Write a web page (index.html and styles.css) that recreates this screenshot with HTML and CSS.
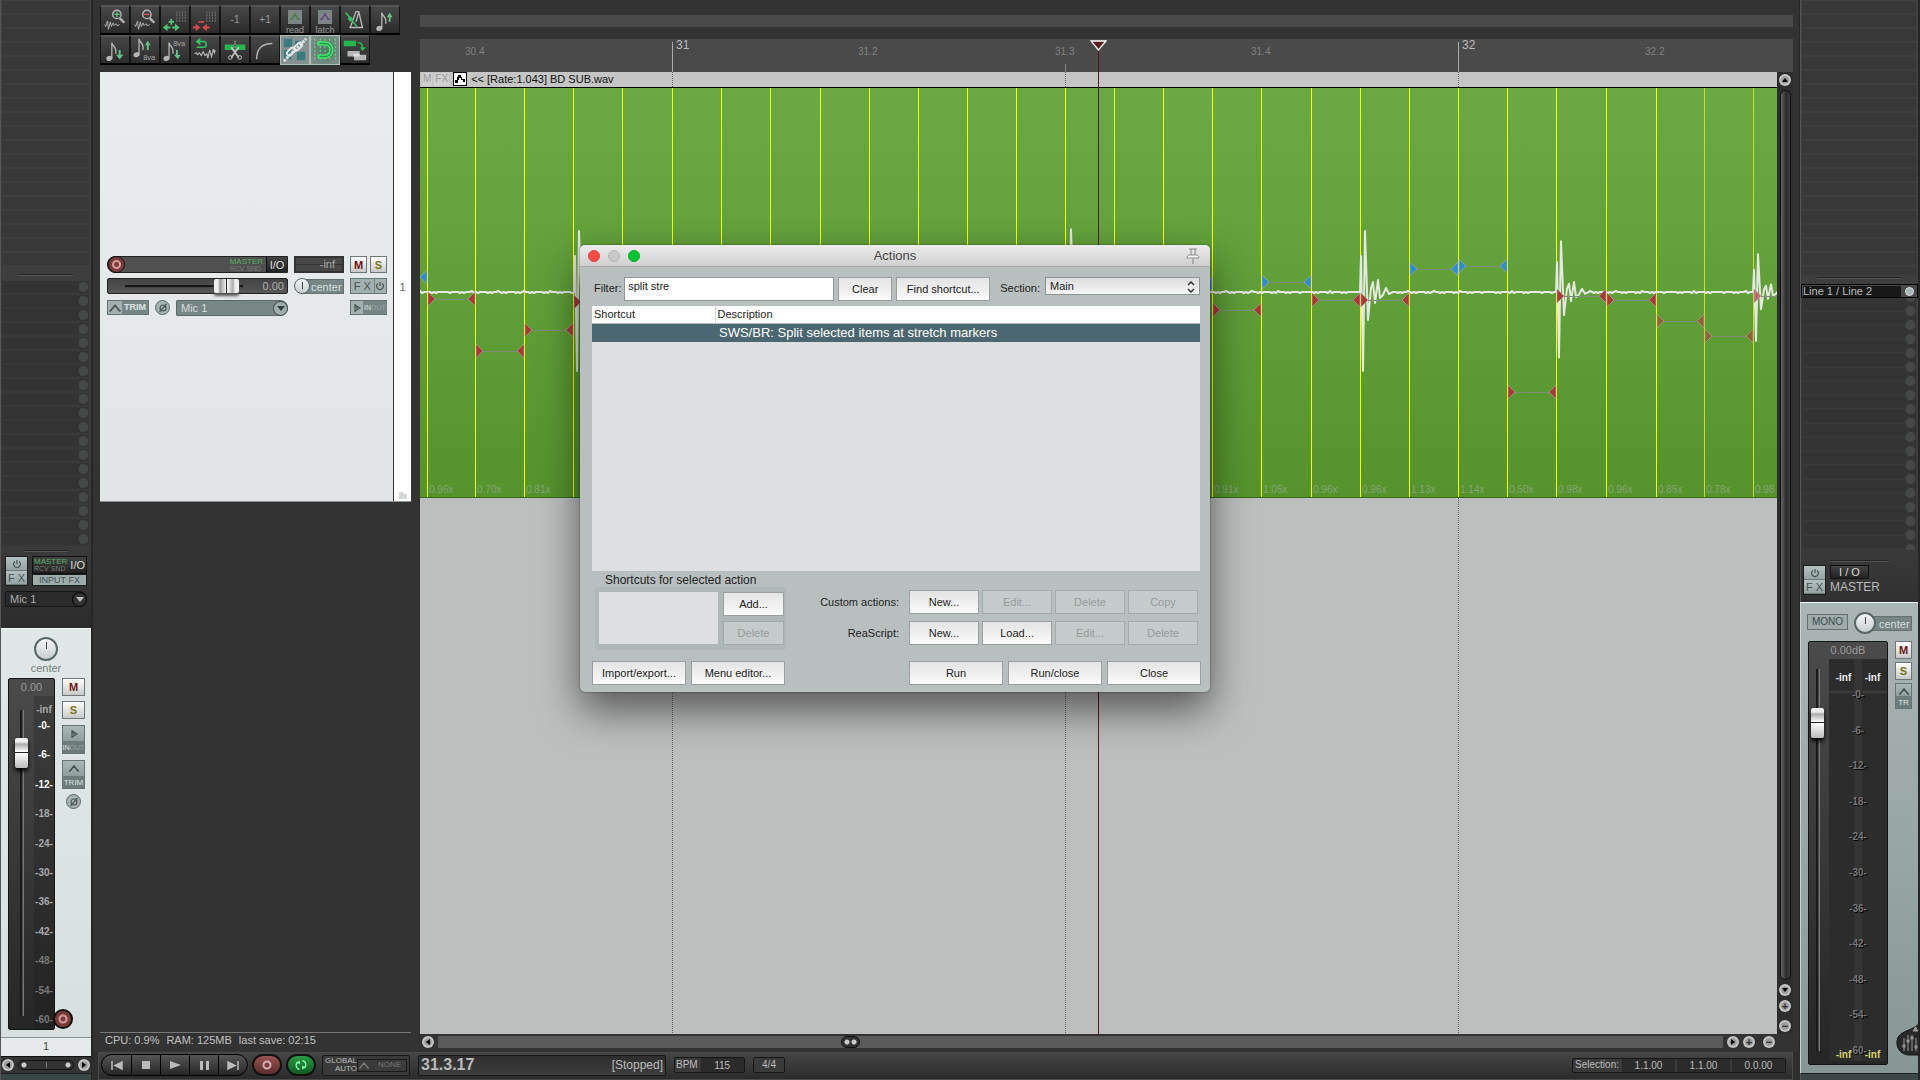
FILE: index.html
```html
<!DOCTYPE html>
<html lang="en">

<head>
    <meta charset="UTF-8">
    <meta name="viewport" content="width=device-width, initial-scale=1.0">
    <title>Actions</title>
    <link rel="stylesheet" href="styles.css">
</head>

<body>
    <!-- shared icons -->
    <svg class="defs" width="0" height="0" aria-hidden="true">
        <symbol id="power" viewBox="0 0 10 10"><path d="M3 2.4a3.4 3.4 0 1 0 4 0M5 1v4" fill="none" stroke="currentColor" stroke-width="1.2" /></symbol>
        <symbol id="env" viewBox="0 0 12 8"><path d="M1 7h1l4-5 4 5h1" fill="none" stroke="currentColor" stroke-width="1.5" /></symbol>
        <symbol id="mon" viewBox="0 0 10 10"><path d="M3 1v8M3 2l5 3-5 3M5 4v2" fill="none" stroke="currentColor" stroke-width="1.2" /></symbol>
        <symbol id="phase" viewBox="0 0 10 10"><circle cx="5" cy="5" r="3" fill="none" stroke="currentColor" stroke-width="1.2" /><path d="M1.5 9l7-8" stroke="currentColor" stroke-width="1.2" /></symbol>
        <symbol id="note" viewBox="0 0 30 30"><ellipse cx="9" cy="24" rx="3.4" ry="2.6" fill="#b5b5b5" transform="rotate(-20 9 24)" /><path d="M11.6 23V7c1 5 6 5 4 12" fill="none" stroke="#b5b5b5" stroke-width="1.4" /></symbol>
    </svg>

    <aside class="mixer">
        <div class="slots inserts"></div>
        <hr class="divider">
        <div class="slots sends"></div>
        <hr class="divider small">
        <div class="strip-io">
            <div class="fx-stack">
                <button aria-label="FX bypass"><svg width="10" height="10"><use href="#power" /></svg></button>
                <button>F X</button>
            </div>
            <div class="io-stack">
                <button class="io"><span class="route"><b>MASTER</b><i>RCV SND</i></span>I/O</button>
                <button class="input-fx">INPUT FX</button>
            </div>
        </div>
        <button class="input-pick dark">Mic 1 <span class="drop"></span></button>

        <section class="channel">
            <div class="pan"><span class="knob"></span><span>center</span></div>
            <div class="channel-body">
                <div class="meter">
                    <span class="gain">0.00</span>
                    <div class="meter-body">
                        <input class="fader" type="range" aria-label="Track volume" min="0" max="100" value="90">
                        <div class="mono-scale">
                            <span>-inf</span>
                            <ul class="scale">
                                <li class="hot">-0-</li><li class="hot">-6-</li><li class="hot">-12-</li><li>-18-</li><li>-24-</li><li>-30-</li><li>-36-</li><li>-42-</li><li class="low">-48-</li><li class="low">-54-</li><li class="low">-60-</li>
                            </ul>
                        </div>
                    </div>
                    <button class="rec-dot" aria-label="Record arm"></button>
                </div>
                <div class="channel-buttons">
                    <button class="ms mute">M</button>
                    <button class="ms solo">S</button>
                    <button class="duo"><svg width="10" height="10"><use href="#mon" /></svg><span class="tiny">IN<i>OUT</i></span></button>
                    <button class="duo"><svg width="12" height="8"><use href="#env" /></svg><span>TRIM</span></button>
                    <button class="round" aria-label="Phase"><svg width="10" height="10"><use href="#phase" /></svg></button>
                </div>
            </div>
            <div class="channel-number">1</div>
        </section>
        <div class="mixer-scroll">
            <button class="dot left" aria-label="Scroll left"></button>
            <span class="mini-bar"></span>
            <button class="dot right" aria-label="Scroll right"></button>
        </div>
        <div class="mixer-foot"></div>
    </aside>

    <main>
        <div class="workspace">
            <div class="tcp">
                <div class="toolbar">
                    <button aria-label="Zoom in"><svg viewBox="0 0 30 30"><path d="M4 20l1 2 2-6 1 9 2-8 1 5 2-4 1 3 2-2 1 2 3-1" fill="none" stroke="#b5b5b5" /><circle cx="17" cy="9" r="4.5" fill="none" stroke="#b5b5b5" stroke-width="1.5" /><path d="M20 13l5 5" stroke="#b5b5b5" stroke-width="2.5" /><path d="M14 9h6M17 6v6" stroke="#4fc27a" stroke-width="1.5" /></svg></button>
                    <button aria-label="Zoom out"><svg viewBox="0 0 30 30"><path d="M4 20l1 2 2-6 1 9 2-8 1 5 2-4 1 3 2-2 1 2 3-1" fill="none" stroke="#b5b5b5" /><circle cx="17" cy="9" r="4.5" fill="none" stroke="#b5b5b5" stroke-width="1.5" /><path d="M20 13l5 5" stroke="#b5b5b5" stroke-width="2.5" /><path d="M14 9h6" stroke="#e05050" stroke-width="1.5" /></svg></button>
                    <button aria-label="Widen grid"><svg viewBox="0 0 30 30"><path d="M17 6v12M20 6v12M23 6v12M26 6v12" stroke="#777" stroke-dasharray="2 1" /><path d="M8 17h6M11 14v6M5 23h5M12 23h5" stroke="#4fc27a" stroke-width="2" /><path d="M7 19v8l-5-4zM15 19v8l5-4z" fill="#4fc27a" /></svg></button>
                    <button aria-label="Narrow grid"><svg viewBox="0 0 30 30"><path d="M17 6v12M20 6v12M23 6v12M26 6v12" stroke="#777" stroke-dasharray="2 1" /><path d="M8 17h6M2 23h4M16 23h4" stroke="#d84848" stroke-width="2" /><path d="M5 19v8l5-4zM17 19v8l-5-4z" fill="#d84848" /></svg></button>
                    <button>-1</button>
                    <button>+1</button>
                    <button class="auto"><svg viewBox="0 0 14 14"><path d="M0 0h14v14H0z" fill="#7d8587" /><path d="M2 9h2l3-5 3 5h2" fill="none" stroke="#4c8045" stroke-width="1.5" /><path d="M3 8h2v2H3zM6 3h2v2H6zM9 8h2v2H9z" fill="#4c8045" /></svg>read</button>
                    <button class="auto"><svg viewBox="0 0 14 14"><path d="M0 0h14v14H0z" fill="#7d8587" /><path d="M2 9h2l3-5 3 5h2" fill="none" stroke="#6a4a80" stroke-width="1.5" /><path d="M3 8h2v2H3zM6 3h2v2H6zM9 8h2v2H9z" fill="#6a4a80" /></svg>latch</button>
                    <button aria-label="Metronome"><svg viewBox="0 0 30 30"><path d="M10 23L16 6h3l4 17H9M19 7l-3 10" fill="none" stroke="#b5b5b5" stroke-width="1.5" /><path d="M5 7l12 15" stroke="#35c463" stroke-width="1.5" /><path d="M10 11l3 3-3 3-3-3z" fill="#35c463" /></svg></button>
                    <button aria-label="Semitone up"><svg viewBox="0 0 30 30"><use href="#note" width="30" height="30" /><path d="M20 17V11" stroke="#63c585" stroke-width="2" /><path d="M17 12l3-5 3 5z" fill="#63c585" /></svg></button>
                    <button aria-label="Semitone down"><svg viewBox="0 0 30 30"><use href="#note" width="30" height="30" /><path d="M20 15v6" stroke="#63c585" stroke-width="2" /><path d="M16 20h8l-4 5z" fill="#63c585" /></svg></button>
                    <button aria-label="Octave up"><svg viewBox="0 0 30 30"><use href="#note" x="-3" y="-4" width="30" height="30" /><path d="M18 15V9" stroke="#63c585" stroke-width="2" /><path d="M15 10l3-5 3 5z" fill="#63c585" /><text x="13" y="26">8va</text></svg></button>
                    <button aria-label="Octave down"><svg viewBox="0 0 30 30"><use href="#note" x="-3" width="30" height="30" /><path d="M17 15v6" stroke="#63c585" stroke-width="2" /><path d="M14 20h7l-3 5z" fill="#63c585" /><text x="13" y="11">8va</text></svg></button>
                    <button aria-label="Undo stretch"><svg viewBox="0 0 30 30"><path d="M8 6h6c3 0 3 6 0 6H6" fill="none" stroke="#35c463" stroke-width="1.6" /><path d="M10 2v8L5 6z" fill="#35c463" /><path d="M4 19l2-1 1 2 2-2 2 3 2-4 2 4 2-2 1 5 2-9 2 7 2-8 1 4 1-3" fill="none" stroke="#b5b5b5" stroke-width="1.2" /></svg></button>
                    <button aria-label="Split items"><svg viewBox="0 0 30 30"><path d="M4 9h10v6H4zM16 9h10v6H16z" fill="#24b84e" /><path d="M15 5v15" stroke="#ccc" stroke-dasharray="2 1" /><path d="M11 12l8 11M19 12l-8 11" stroke="#c5c5c5" stroke-width="1.8" /><circle cx="10" cy="23" r="2" fill="none" stroke="#c5c5c5" /><circle cx="20" cy="23" r="2" fill="none" stroke="#c5c5c5" /></svg></button>
                    <button aria-label="Fade"><svg viewBox="0 0 30 30"><path d="M6 25C6 13 12 8 23 8" fill="none" stroke="#b5b5b5" stroke-width="1.6" /></svg></button>
                    <button class="lit" aria-label="Group link"><svg viewBox="0 0 30 30"><path d="M3 3h9v9H3zM15 5h6v7h-6zM3 15h8v10H3zM17 17h9v9h-9z" fill="#3b7b80" /><path d="M3 27L27 3" stroke="#ddd" stroke-width="3" stroke-dasharray="3 1" /><g fill="none" stroke="#e8e8e8" stroke-width="2"><rect x="6" y="14" width="10" height="5" rx="2.5" transform="rotate(-45 11 17)" /><rect x="13" y="9" width="10" height="5" rx="2.5" transform="rotate(-45 18 11)" /></g></svg></button>
                    <button class="lit magnet" aria-label="Snap"><svg viewBox="0 0 30 30"><path d="M4 3v24M10 3v24M15 3v24M20 3v24M26 3v24" stroke="#6fe394" stroke-dasharray="2 2" /><path d="M7 8h8c9 0 9 14 0 14H7" fill="none" stroke="#3cf06c" stroke-width="4.500" /><path d="M9 8h6c9 0 9 14 0 14H9" fill="none" stroke="#28914a" stroke-width="1.500" /></svg></button>
                    <button aria-label="Ripple"><svg viewBox="0 0 30 30"><path d="M3 5h13v6H3z" fill="#24b84e" /><path d="M18 7c4 0 5 3 5 6" fill="none" stroke="#24b84e" stroke-width="1.5" /><path d="M20 12h7l-4 4z" fill="#24b84e" /><path d="M7 16h13v6H7zM14 20h13v6H14z" fill="#b5b5b5" /><path d="M13 19h7v3h-7z" fill="#ddd" /></svg></button>
                </div>

                <section class="track">
                    <div class="track-controls">
                        <div class="name-row">
                            <button class="rec-dot" aria-label="Record arm"></button>
                            <span class="route"><b>MASTER</b><i>RCV SND</i></span>
                            <button class="io">I/O</button>
                        </div>
                        <div class="peak">-inf</div>
                        <div class="pair">
                            <button class="ms mute">M</button>
                            <button class="ms solo">S</button>
                        </div>
                        <div class="vol-row">
                            <input class="hfader" type="range" aria-label="Volume" min="0" max="100" value="96">
                            <span>0.00</span>
                        </div>
                        <div class="pan-pill"><span class="knob"></span><span>center</span></div>
                        <div class="joined"><button class="wide">F X</button><button aria-label="FX bypass"><svg width="10" height="10"><use href="#power" /></svg></button></div>
                        <div class="trim-row">
                            <button class="joined trim"><svg width="14" height="9"><use href="#env" /></svg><span>TRIM</span></button>
                            <button class="round" aria-label="Phase"><svg width="10" height="10"><use href="#phase" /></svg></button>
                            <button class="input-pick">Mic 1 <span class="drop"></span></button>
                        </div>
                        <span></span>
                        <button class="joined trim"><svg width="12" height="10"><use href="#mon" /></svg><span class="tiny">IN<i>OUT</i></span></button>
                    </div>
                    <div class="track-index">
                        <span>1</span>
                        <svg width="8" height="7"><path d="M0 0h4l1 2h3v5H0z" fill="#d5d8d8" /></svg>
                    </div>
                </section>
                <div class="tcp-empty"></div>
                <p class="status"><span>CPU: 0.9%</span><span>RAM: 125MB</span><span>last save: 02:15</span></p>
            </div>

            <div class="arrange">
                <div class="region-lane"></div>
                <div class="ruler"><svg id="ruler" width="100%" height="33"></svg></div>
                <div class="lanes">
                    <div class="canvas">
                        <div class="item-head"><button>M</button><button>FX</button><button class="env-on" aria-label="Take envelope"><svg width="12" height="12"><path d="M1 10V7h2V4h1V2h3v2h1v2h3v3H9V7H7V5H5v2H4v3z" fill="#000" /></svg></button><span>&lt;&lt; [Rate:1.043] BD SUB.wav</span></div>
                        <svg id="item" class="item" width="100%"></svg>
                        <svg id="grid" class="grid" width="100%" height="100%"></svg>
                    </div>
                    <div class="vscroll">
                        <button class="dot up" aria-label="Scroll up"></button>
                        <span class="bar"></span>
                        <button class="dot down" aria-label="Scroll down"></button>
                        <button class="dot sign" aria-label="Zoom in">+</button>
                        <button class="dot sign" aria-label="Zoom out">−</button>
                    </div>
                </div>
                <div class="hscroll">
                    <button class="dot left" aria-label="Scroll left"></button>
                    <span class="hbar"><i></i></span>
                    <button class="dot right" aria-label="Scroll right"></button>
                    <button class="dot sign" aria-label="Zoom in">+</button>
                    <button class="dot sign" aria-label="Zoom out">−</button>
                </div>
                <div class="playhead"><svg width="17" height="11"><path d="M1 1h15L8.500 10z" fill="#5a2020" stroke="#fff" stroke-width="1.3" /></svg></div>
            </div>
        </div>

        <footer class="transport">
            <div class="keys">
                <button aria-label="Go to start"><svg width="12" height="9"><path d="M1 0v9M11 1v7L4 4.500z" stroke="#bbb" stroke-width="1.5" fill="#bbb" /></svg></button>
                <button aria-label="Stop"><svg width="8" height="8"><path d="M0 0h8v8H0z" fill="#bbb" /></svg></button>
                <button aria-label="Play"><svg width="11" height="8"><path d="M0 0l11 4-11 4z" fill="#bbb" /></svg></button>
                <button aria-label="Pause"><svg width="9" height="9"><path d="M0 0h3v9H0zM6 0h3v9H6z" fill="#bbb" /></svg></button>
                <button aria-label="Go to end"><svg width="12" height="9"><path d="M11 0v9M1 1v7l7-3.500z" stroke="#bbb" stroke-width="1.500" fill="#bbb" /></svg></button>
            </div>
            <button class="pill record" aria-label="Record"><svg width="12" height="12"><circle cx="6" cy="6" r="3.500" fill="none" stroke="#d5b0b0" stroke-width="2" /></svg></button>
            <button class="pill loop" aria-label="Repeat"><svg width="14" height="14" viewBox="0 0 14 14"><path d="M5.500 11.500a4.500 4.500 0 0 1-2-7.500M8.500 2.500a4.500 4.500 0 0 1 2 7.500" fill="none" stroke="#7dffa0" stroke-width="1.500" /><path d="M2 4.500l4-2v4zM12 9.500l-4 2v-4z" fill="#7dffa0" /></svg></button>
            <div class="box global"><span>GLOBAL<br>AUTO</span><button><svg width="12" height="8"><use href="#env" /></svg><span>NONE</span></button></div>
            <div class="box time"><strong>31.3.17</strong><span>[Stopped]</span></div>
            <div class="box bpm"><label for="bpm">BPM</label><input id="bpm" value="115"></div>
            <div class="box sig">4/4</div>
            <div class="box selection"><span>Selection:</span><output>1.1.00</output><output>1.1.00</output><output>0.0.00</output></div>
        </footer>
    </main>

    <aside class="mixer master">
        <div class="slots inserts"></div>
        <hr class="divider">
        <button class="hw-out"><span>Line 1 / Line 2</span><i></i></button>
        <div class="slots sends"></div>
        <hr class="divider small">
        <div class="strip-io">
            <div class="fx-stack">
                <button aria-label="FX bypass"><svg width="10" height="10"><use href="#power" /></svg></button>
                <button>F X</button>
            </div>
            <div class="io-stack"><button class="io">I / O</button><span class="strip-name">MASTER</span></div>
        </div>
        <section class="channel">
            <div class="master-top">
                <button class="mono">MONO</button>
                <div class="pan-pill"><span class="knob"></span><span>center</span></div>
            </div>
            <div class="channel-body">
                <div class="meter">
                    <span class="gain">0.00dB</span>
                    <div class="meter-body">
                        <input class="fader" type="range" aria-label="Master volume" min="0" max="100" value="89">
                        <div class="stereo">
                            <p><span>-inf</span><span>-inf</span></p>
                            <ul class="scale">
                                <li>-0-</li><li>-6-</li><li>-12-</li><li>-18-</li><li>-24-</li><li>-30-</li><li>-36-</li><li>-42-</li><li>-48-</li><li>-54-</li><li>-60-</li>
                            </ul>
                            <p class="floor"><span>-inf</span><span>-inf</span></p>
                        </div>
                    </div>
                </div>
                <div class="channel-buttons">
                    <button class="ms mute">M</button>
                    <button class="ms solo">S</button>
                    <button class="duo"><svg width="12" height="8"><use href="#env" /></svg><span>TR</span></button>
                </div>
            </div>
            <button class="mixer-tab" aria-label="Mixer menu"><svg width="24" height="36"><path d="M24 0C22 10 2 8 1 20c-1 9 6 14 12 14h11z" fill="#292929" stroke="#161616" /><path d="M8 17v13M12 14v16M16 14v16M20 17v13M17 10h5l-2.500-4z" stroke="#999" fill="#999" /><path d="M6.500 25h3M10.500 20h3M14.500 17h3M18.500 26h3" stroke="#999" stroke-width="3" /></svg></button>
        </section>
        <div class="mixer-foot"></div>
    </aside>

    <!-- Actions window -->
    <div class="dialog" role="dialog" aria-labelledby="dialog-title">
        <header>
            <button class="light close" aria-label="Close window"></button>
            <button class="light" aria-label="Minimise"></button>
            <button class="light zoom" aria-label="Zoom window"></button>
            <h1 id="dialog-title">Actions</h1>
            <svg class="pin" width="14" height="16"><path d="M3 1h8M5 1v6M9 1v6M1 10c0-3 3-3 4-3h4c1 0 4 0 4 3zM7 10v6" fill="#fff" stroke="#888" /></svg>
        </header>
        <div class="filter-row">
            <label for="filter">Filter:</label>
            <input id="filter" type="text" value="split stre">
            <button class="btn">Clear</button>
            <button class="btn mid">Find shortcut...</button>
            <label for="section">Section:</label>
            <div class="select-wrap">
                <select id="section"><option>Main</option></select>
                <svg width="8" height="12"><path d="M1 4l3-3 3 3M1 8l3 3 3-3" fill="none" stroke="#333" stroke-width="1.500" /></svg>
            </div>
        </div>
        <div class="action-list">
            <table>
                <thead><tr><th>Shortcut</th><th>Description</th></tr></thead>
                <tbody><tr><td></td><td>SWS/BR: Split selected items at stretch markers</td></tr></tbody>
            </table>
        </div>
        <div class="dialog-lower">
            <fieldset>
                <legend>Shortcuts for selected action</legend>
                <div class="shortcut-box">
                    <div class="shortcut-list"></div>
                    <div class="stack"><button class="btn">Add...</button><button class="btn" disabled>Delete</button></div>
                </div>
            </fieldset>
            <div class="custom">
                <span>Custom actions:</span>
                <button class="btn">New...</button><button class="btn" disabled>Edit...</button><button class="btn" disabled>Delete</button><button class="btn" disabled>Copy</button>
                <span>ReaScript:</span>
                <button class="btn">New...</button><button class="btn">Load...</button><button class="btn" disabled>Edit...</button><button class="btn" disabled>Delete</button>
            </div>
        </div>
        <div class="dialog-foot">
            <button class="btn mid">Import/export...</button>
            <button class="btn mid">Menu editor...</button>
            <button class="btn mid run">Run</button>
            <button class="btn mid">Run/close</button>
            <button class="btn mid">Close</button>
        </div>
    </div>

    <script src="script.js"></script>
</body>

</html>
```
FILE: styles.css
```css
* {
    box-sizing: border-box;
}

body {
    margin: 0;
    height: 100vh;
    display: flex;
    overflow: hidden;
    background: #2e2e2e;
    color: #bbb;
    font-family: "Liberation Sans", Arial, sans-serif;
    font-size: 11px;
    line-height: 12px;
}

button, input, select {
    font: inherit;
    color: inherit;
    margin: 0;
    padding: 0;
    border: 0;
    border-radius: 0;
    background: none;
}

p, ul, h1, hr {
    margin: 0;
    padding: 0;
    border: 0;
}

ul {
    list-style: none;
}

i {
    font-style: normal;
}

svg {
    display: block;
    flex: none;
}

.defs {
    position: absolute;
}

/* mixer strips */
.mixer {
    width: 92px;
    flex: none;
    display: flex;
    flex-direction: column;
    background: linear-gradient(#414141, #3a3a3a 550px, #2d2d2d 620px);
    border-left: 1px solid #555;
    border-right: 1px solid #262626;
}

.slots {
    margin: 0 2px 0 1px;
    background: repeating-linear-gradient(#383838 0 12px, #3e3e3e 12px 14px);
}

.inserts {
    height: 266px;
    margin-top: 1px;
}

.sends {
    height: 266px;
    background: radial-gradient(circle at 50% 6px, #454846 4px, #3f4240 5px, transparent 5px) right / 11px 14px repeat-y, repeating-linear-gradient(#343434 0 12px, #393939 12px 14px);
}

.divider {
    height: 2px;
    margin: 7px 18px 5px;
    background: #242424;
    border-bottom: 1px solid #555;
}

.divider.small {
    margin: 3px 23px 4px;
}

.strip-io {
    display: flex;
    gap: 4px;
    padding: 0 4px;
    height: 30px;
}

.fx-stack {
    width: 23px;
    border: 1px solid #1c1c1c;
    display: flex;
    flex-direction: column;
}

.fx-stack button {
    flex: 1;
    width: 100%;
    display: flex;
    align-items: center;
    justify-content: center;
    color: #465252;
    background: linear-gradient(#b5c1c1, #95a3a3);
    border-bottom: 1px solid #6e7a7a;
}

.io-stack {
    flex: 1;
    display: flex;
    flex-direction: column;
}

.io {
    height: 18px;
    display: flex;
    align-items: center;
    justify-content: center;
    gap: 3px;
    border: 1px solid #111;
    background: linear-gradient(#444, #222);
    color: #ddd;
}

.route {
    font-size: 8px;
    line-height: 7px;
    display: flex;
    flex-direction: column;
    text-align: left;
}

.route b {
    color: #5cae68;
    font-weight: normal;
}

.route i {
    color: #7a7a7a;
    font-size: 7px;
}

.input-fx {
    height: 12px;
    font-size: 9px;
    line-height: 10px;
    color: #465252;
    background: #9eabab;
    border: 1px solid #1c1c1c;
}

.input-pick {
    display: flex;
    align-items: center;
    justify-content: space-between;
    height: 16px;
    padding: 0 0 0 4px;
    border: 1px solid #5a6868;
    border-right: 0;
    background: #788786;
    color: #d5dcdc;
    border-radius: 2px 8px 8px 2px;
}

.input-pick.dark {
    margin: 5px 4px 21px;
    background: #2a2a2a;
    border-color: #151515;
    color: #aaa;
}

.drop {
    width: 15px;
    height: 15px;
    border: 1px solid #3c4747;
    border-radius: 50%;
    background: #9fadad;
    display: flex;
    align-items: center;
    justify-content: center;
}

.drop::after {
    content: "";
    border: 4px solid transparent;
    border-top: 5px solid #35403f;
    border-bottom: 0;
}

.dark .drop {
    background: #333;
    border-color: #000;
}

.dark .drop::after {
    border-top-color: #bbb;
}

.channel {
    flex: 1;
    display: flex;
    flex-direction: column;
    background: linear-gradient(#e1e7e7, #d8dfdf);
    border-top: 1px solid #f4f7f7;
    position: relative;
}

.pan {
    display: flex;
    flex-direction: column;
    align-items: center;
    gap: 1px;
    padding-top: 8px;
    height: 49px;
    color: #748281;
}

.knob {
    flex: none;
    width: 24px;
    height: 24px;
    border: 2px solid #596766;
    border-radius: 50%;
    background: linear-gradient(#444, #444) 50% 3px / 1px 7px no-repeat, linear-gradient(#f3f5f5, #c8cfcf);
}

.channel-body {
    flex: 1;
    display: flex;
    gap: 7px;
    padding: 0 6px 7px 7px;
}

.meter {
    width: 48px;
    display: flex;
    flex-direction: column;
    background: linear-gradient(#4b4b4b, #262626);
    border: 1px solid #151515;
    border-radius: 2px;
    position: relative;
    color: #aaa;
}

.gain {
    height: 17px;
    line-height: 17px;
    text-align: center;
    color: #999;
}

.meter-body {
    flex: 1;
    display: flex;
    justify-content: space-between;
}

.fader {
    appearance: none;
    writing-mode: vertical-lr;
    direction: rtl;
    width: 13px;
    margin: 14px 0 13px 6px;
    background: linear-gradient(90deg, #151515, #202020 2px, #777 3px) 50% 0 / 4px 100% no-repeat;
}

.fader::-webkit-slider-thumb {
    appearance: none;
    width: 13px;
    height: 30px;
    border-radius: 2px;
    background: linear-gradient(transparent 14px, #222 14px 15px, transparent 15px), linear-gradient(#eee 4px, #aaa 6px, #fff 14px, #ddd 22px, #bbb);
    box-shadow: 0 3px 4px #000;
}

.mono-scale {
    width: 20px;
    display: flex;
    flex-direction: column;
    align-items: center;
    padding-top: 8px;
    background: linear-gradient(#3d3d3d, #222);
    font-size: 10px;
    font-weight: bold;
}

.scale {
    flex: 1;
    display: flex;
    flex-direction: column;
    justify-content: space-between;
    align-items: center;
    padding: 4px 0 3px;
    font-size: 10px;
    font-weight: bold;
    color: #aaa;
}

.scale .hot {
    color: #fff;
}

.scale .low {
    color: #777;
}

.rec-dot {
    flex: none;
    width: 17px;
    height: 17px;
    border: 1px solid #111;
    border-radius: 50%;
    background: radial-gradient(circle, #7c3b3b 2px, #d59a9a 3px 4px, #7c3b3b 5px);
}

.meter .rec-dot {
    position: absolute;
    right: -19px;
    bottom: 0;
    width: 20px;
    height: 20px;
    border-width: 2px;
}

.channel-buttons {
    width: 23px;
    display: flex;
    flex-direction: column;
    align-items: center;
    gap: 5px;
}

.ms {
    width: 100%;
    height: 18px;
    font-weight: bold;
    border: 1px solid #6d7777;
    background: linear-gradient(#fff, #c8c8c8);
}

.mute {
    color: #6d1515;
}

.solo {
    color: #77751e;
}

.duo {
    width: 100%;
    height: 29px;
    margin-top: 1px;
    display: flex;
    flex-direction: column;
    align-items: center;
    justify-content: space-between;
    padding-top: 3px;
    border: 1px solid #667473;
    background: linear-gradient(#aab7b6, #8f9e9d 15px, #6d7b7a 15px);
    color: #43504f;
    font-size: 8px;
    line-height: 11px;
}

.duo span {
    color: #dde3e3;
}

.duo i, .trim i {
    color: #9aa5a5;
}

.duo .tiny, .trim .tiny {
    font-size: 7px;
    font-weight: normal;
}

.round {
    flex: none;
    width: 15px;
    height: 15px;
    display: flex;
    align-items: center;
    justify-content: center;
    border: 1px solid #5b6968;
    border-radius: 50%;
    background: #a6b2b2;
    color: #4a5756;
}

.channel-number {
    height: 20px;
    line-height: 17px;
    text-align: center;
    color: #444;
    border-top: 1px solid #8a9292;
    border-bottom: 1px solid #111;
    background: #e7eaea;
}

.mixer-scroll {
    height: 16px;
    display: flex;
    align-items: center;
    justify-content: space-between;
    padding: 0 1px;
    background: #333;
}

.mini-bar {
    width: 56px;
    height: 10px;
    border: 1px solid #111;
    border-radius: 6px;
    background: radial-gradient(circle at 5px 4px, #ccc 2px, transparent 3px), radial-gradient(circle at 49px 4px, #ccc 2px, transparent 3px), linear-gradient(#777, #777) 50% 50% / 1px 6px no-repeat, #333;
}

.mixer-foot {
    height: 7px;
    background: #3b4747;
    border-top: 1px solid #1b2222;
}

.dot {
    flex: none;
    width: 12px;
    height: 12px;
    border-radius: 50%;
    background: radial-gradient(circle, #999 3px, #ccc 5px, #888);
    display: flex;
    align-items: center;
    justify-content: center;
    color: #333;
    font-weight: bold;
}

.dot:not(.sign)::after {
    content: "";
    border: 3px solid transparent;
}

.dot.left::after {
    border-right: 4px solid #000;
    border-left: 0;
}

.dot.right::after {
    border-left: 4px solid #000;
    border-right: 0;
}

.dot.up::after {
    border-bottom: 4px solid #000;
    border-top: 0;
}

.dot.down::after {
    border-top: 4px solid #000;
    border-bottom: 0;
}

/* master strip */
.master {
    width: 120px;
    border-right: 2px solid #262626;
}

.master .inserts {
    height: 274px;
}

.master .divider {
    margin: 2px 17px 5px 16px;
}

.hw-out {
    height: 14px;
    display: flex;
    align-items: center;
    justify-content: space-between;
    padding: 0 3px 0 1px;
    border: 1px solid #000;
    background: #4a4a4a;
    text-align: left;
}

.hw-out span {
    width: 98px;
    background: #181818;
    line-height: 11px;
}

.hw-out i {
    width: 9px;
    height: 9px;
    border-radius: 50%;
    background: #a9b8b8;
    border: 1px solid #ddd;
}

.master .sends {
    height: 252px;
}

.master .divider.small {
    margin: 10px 29px 3px;
}

.master .strip-io {
    height: 37px;
    padding: 0 3px 7px 2px;
}

.master .io {
    width: 39px;
    height: 15px;
}

.strip-name {
    font-size: 12px;
    line-height: 16px;
}

.master .channel {
    background: linear-gradient(#aab6b5, #879695);
    border-left: 1px solid #cad2d2;
    margin-left: -1px;
}

.master-top {
    display: flex;
    gap: 6px;
    padding: 9px 6px 0 6px;
    height: 38px;
}

.mono {
    width: 41px;
    height: 16px;
    border: 1px solid #66706f;
    background: #9eabaa;
    color: #3e4b4a;
    font-size: 10px;
    margin-top: 2px;
}

.pan-pill {
    flex: 1;
    display: flex;
    align-items: center;
    color: #d8dede;
}

.master-top .pan-pill {
    height: 22px;
}

.pan-pill span + span {
    flex: 1;
    height: 15px;
    line-height: 14px;
    margin-left: -8px;
    padding-left: 10px;
    background: #778685;
    border: 1px solid #64716f;
}

.pan-pill .knob {
    position: relative;
    width: 22px;
    height: 22px;
}

.master .channel-body {
    padding-bottom: 8px;
    padding-right: 6px;
}

.master .meter {
    width: 80px;
}

.master .channel-buttons {
    width: 17px;
    gap: 3px;
}

.master .duo {
    height: 26px;
    margin: 0;
    background: linear-gradient(#aab7b6, #8f9e9d 12px, #6d7b7a 12px);
}

.master .fader {
    margin-left: 2px;
    margin-top: 10px;
}

.stereo {
    width: 58px;
    display: flex;
    flex-direction: column;
    background: linear-gradient(90deg, #2c2c2c 25px, #343434 25px 33px, #2c2c2c 33px);
    margin-bottom: 3px;
    position: relative;
}

.stereo p {
    display: flex;
    justify-content: space-around;
    height: 34px;
    padding-top: 13px;
    border-bottom: 2px solid #3a3a3a;
    color: #eee;
    font-size: 10px;
    font-weight: bold;
}

.stereo .scale {
    padding: 0 0 4px;
    margin-top: -4px;
    color: #777;
    text-shadow: 1px 1px #000;
}

.stereo .floor {
    position: absolute;
    left: 0;
    right: 0;
    bottom: 0;
    height: 12px;
    padding: 0;
    border: 0;
    color: #d5d56a;
}

.mixer-tab {
    position: absolute;
    right: -2px;
    bottom: 16px;
}

/* middle */
main {
    flex: 1;
    min-width: 0;
    display: flex;
    flex-direction: column;
}

.workspace {
    flex: 1;
    display: flex;
    gap: 9px;
    min-height: 0;
    background: #333;
    border-left: 1px solid #262626;
    border-right: 1px solid #262626;
    padding: 0 6px 0 7px;
}

.tcp {
    width: 311px;
    flex: none;
    display: flex;
    flex-direction: column;
}

.toolbar {
    display: grid;
    grid-template-columns: repeat(10, 30px);
    grid-auto-rows: 30px;
    padding: 5px 0 7px;
}

.toolbar button {
    border: 1px solid #151515;
    border-top: 2px solid #555;
    border-bottom: 2px solid #000;
    background: linear-gradient(#474747, #2b2b2b);
    color: #999;
    font-size: 10px;
    overflow: hidden;
}

.toolbar button > svg {
    width: 28px;
    height: 28px;
    margin-top: -1px;
}

.toolbar svg text {
    font-size: 8px;
    fill: #aaa;
}

.toolbar .auto {
    display: flex;
    flex-direction: column;
    align-items: center;
    font-size: 9px;
    line-height: 8px;
    padding-top: 3px;
}

.toolbar .auto > svg {
    width: 14px;
    height: 14px;
    margin: 0 0 2px;
}

.toolbar .lit {
    background: #84918f;
    border: 1px solid #b0bdba;
}

.toolbar .magnet {
    background: radial-gradient(#4f7a60, #84918f);
}

.track {
    display: flex;
    height: 430px;
    border-bottom: 1px solid #8a8f8f;
}

.track-controls {
    flex: 1;
    display: grid;
    grid-template-columns: 181px 50px 37px;
    grid-auto-rows: 16px;
    gap: 6px;
    align-content: start;
    padding: 184px 6px 0 7px;
    background: linear-gradient(#e9eded, #e1e5e6);
}

.name-row {
    display: flex;
    align-items: center;
    gap: 3px;
    height: 17px;
    border: 1px solid #222;
    border-radius: 8px 0 0 8px;
    background: #505050;
}

.name-row .rec-dot {
    margin-right: auto;
}

.name-row .io {
    width: 21px;
    height: 15px;
    border: 0;
    border-left: 1px solid #111;
}

.peak {
    height: 17px;
    border: 2px solid #333;
    background: linear-gradient(transparent 6px, #333 6px 7px, transparent 7px), #484848;
    padding-right: 7px;
    line-height: 13px;
    text-align: right;
    color: #aaa;
}

.pair {
    display: flex;
    gap: 3px;
}

.pair .ms {
    width: 17px;
    height: 17px;
}

.vol-row {
    display: flex;
    align-items: center;
    justify-content: space-between;
    padding: 0 3px 0 17px;
    border: 1px solid #222;
    border-radius: 2px;
    background: linear-gradient(#444, #585858);
    color: #aaa;
}

.hfader {
    appearance: none;
    width: 118px;
    height: 14px;
    background: linear-gradient(#161616 2px, #777 3px) 0 50% / 100% 3px no-repeat;
}

.hfader::-webkit-slider-thumb {
    appearance: none;
    width: 25px;
    height: 14px;
    border-radius: 2px;
    background: linear-gradient(90deg, transparent 12px, #222 12px 13px, transparent 13px), linear-gradient(90deg, #eee 4px, #999 6px, #fff 13px, #aaa 19px, #eee 21px);
    box-shadow: 0 3px 3px #555;
}

.track .pan-pill .knob {
    width: 16px;
    height: 16px;
    border-width: 1px;
}

.track .pan-pill span + span {
    padding-left: 7px;
    margin-left: -7px;
}

.joined {
    display: flex;
    border: 1px solid #667473;
    background: #a3b0af;
    color: #485554;
}

.joined button {
    flex: 1;
    display: flex;
    align-items: center;
    justify-content: center;
}

.joined .wide {
    flex: 2;
    border-right: 1px solid #74827f;
}

.trim-row {
    display: flex;
    gap: 6px;
}

.trim-row .input-pick {
    flex: 1;
}

.trim {
    height: 15px;
    align-items: center;
    font-size: 9px;
    font-weight: bold;
}

.trim span {
    flex: 1;
    height: 13px;
    line-height: 13px;
    padding: 0 2px;
    background: #778685;
    color: #dde3e3;
}

.trim .tiny {
    padding: 0 1px;
    text-align: left;
}

.trim-row .trim {
    width: 42px;
}

.track-index {
    width: 18px;
    display: flex;
    flex-direction: column;
    align-items: center;
    justify-content: space-between;
    padding: 209px 0 2px;
    background: #fff;
    border-left: 1px solid #333;
    color: #666;
}

.tcp-empty {
    flex: 1;
    border-bottom: 1px solid #777;
}

.status {
    height: 19px;
    display: flex;
    gap: 7px;
    padding-left: 5px;
    line-height: 15px;
    color: #c0c0c0;
}

.arrange {
    flex: 1;
    min-width: 0;
    display: flex;
    flex-direction: column;
    position: relative;
}

.region-lane {
    height: 12px;
    margin: 15px 0 12px;
    background: #4a4a4a;
}

.ruler {
    height: 33px;
    background: #4a4a4a;
}

.ruler text {
    font-size: 10px;
    fill: #808080;
}

.ruler .bar {
    font-size: 12px;
    fill: #bbb;
}

.lanes {
    flex: 1;
    display: flex;
    min-height: 0;
}

.canvas {
    flex: 1;
    min-width: 0;
    position: relative;
    background: #bdbfbe;
    overflow: hidden;
}

.item-head {
    height: 15px;
    display: flex;
    align-items: center;
    gap: 2px;
    padding: 0 0 1px 2px;
    background: #c4c5c4;
    color: #111;
}

.item-head button {
    height: 13px;
    padding: 0 1px;
    background: #d0d0d0;
    color: #999;
    font-size: 10px;
}

.item-head .env-on {
    width: 14px;
    height: 14px;
    padding: 0;
    border: 1px solid #000;
    background: #fff;
    margin: 0 2px;
}

.item {
    height: 411px;
    border-top: 1px solid #000;
    border-bottom: 1px solid #336b16;
    background: linear-gradient(#6aaa44, #56932d);
}

.item text {
    font-size: 10px;
    fill: #86a57c;
}

.item .stretch {
    stroke: #ffff00;
}

.item .late {
    stroke: #cfdc20;
}

.item .wave {
    fill: none;
    stroke: #e4e8df;
    stroke-width: 2;
    stroke-linejoin: round;
}

.grid {
    position: absolute;
    inset: 0;
}

.grid line {
    stroke: #666;
    stroke-dasharray: 1 1;
}

.playhead {
    position: absolute;
    left: 678px;
    top: 40px;
    bottom: 18px;
    width: 1px;
    background: #5c1a20;
}

.playhead svg {
    margin-left: -8px;
}

.vscroll {
    width: 16px;
    display: flex;
    flex-direction: column;
    align-items: center;
    gap: 4px;
    padding: 2px 0;
    background: #2d2d2d;
}

.vscroll .sign + .sign {
    margin-top: 4px;
}

.bar {
    flex: 1;
    width: 11px;
    border: 1px solid #111;
    border-radius: 6px;
    background: linear-gradient(90deg, #666, #2c2c2c 5px, #3d3d3d);
}

.hscroll {
    height: 18px;
    display: flex;
    align-items: center;
    gap: 4px;
    padding: 0 18px 2px 2px;
    background: #333;
}

.hscroll .sign + .sign {
    margin-left: 4px;
}

.hbar {
    flex: 1;
    height: 12px;
    background: #5a5a5a;
}

.hbar i {
    display: block;
    width: 19px;
    height: 12px;
    margin-left: 403px;
    border: 1px solid #111;
    border-radius: 6px;
    background: radial-gradient(circle at 5px 5px, #ccc 2px, transparent 3px), radial-gradient(circle at 12px 5px, #ccc 2px, transparent 3px), #333;
}

/* transport */
.transport {
    height: 28px;
    display: flex;
    align-items: center;
    gap: 4px;
    margin: 0 7px 0 6px;
    padding: 0 6px 2px 2px;
    border: 1px solid #4a4a4a;
    background: linear-gradient(#454545, #2b2b2b);
}

.keys {
    display: flex;
    border: 1px solid #000;
    border-radius: 11px;
    overflow: hidden;
    background: linear-gradient(#555, #262626);
}

.keys button {
    width: 29px;
    height: 20px;
    display: flex;
    align-items: center;
    justify-content: center;
}

.keys button + button {
    border-left: 1px solid #000;
}

.pill {
    width: 30px;
    height: 22px;
    display: flex;
    align-items: center;
    justify-content: center;
    border: 2px solid #111;
    border-radius: 11px;
}

.record {
    background: linear-gradient(#9a5252, #5c2c2c);
}

.loop {
    background: linear-gradient(#2b9a45, #145a25);
}

.box {
    height: 21px;
    display: flex;
    align-items: center;
    border: 1px solid #171717;
    border-radius: 2px;
    background: #3a3a3a;
}

.global {
    width: 88px;
    justify-content: space-between;
    margin-left: 2px;
    padding: 0 2px;
    font-size: 8px;
    line-height: 8px;
    text-align: right;
}

.global button {
    width: 51px;
    height: 13px;
    display: flex;
    align-items: center;
    gap: 8px;
    border: 1px solid #1a1a1a;
    color: #777;
}

.time {
    width: 248px;
    justify-content: space-between;
    padding: 0 2px;
    margin-left: 4px;
    font-size: 12px;
    background: linear-gradient(#2e2e2e, #3e3e3e);
}

.time strong {
    font-size: 16px;
}

.bpm {
    width: 71px;
    height: 16px;
    margin-left: 4px;
    padding-left: 1px;
    font-size: 10px;
}

.bpm input {
    width: 43px;
    height: 14px;
    margin-left: 3px;
    text-align: center;
    background: #2b2b2b;
}

.sig {
    width: 32px;
    height: 16px;
    margin-left: 4px;
    justify-content: center;
    font-size: 10px;
}

.selection {
    height: 15px;
    margin-left: auto;
    gap: 2px;
    padding-left: 2px;
    font-size: 10px;
}

.selection output {
    width: 53px;
    height: 13px;
    line-height: 13px;
    text-align: center;
    background: #2b2b2b;
}

.selection span {
    margin-right: 1px;
}

/* Actions window */
.dialog {
    position: absolute;
    left: 580px;
    top: 245px;
    width: 630px;
    border-radius: 5px;
    background: #b9bfbf;
    color: #222;
    box-shadow: 0 18px 40px rgba(0, 0, 0, 0.55), 0 0 2px rgba(0, 0, 0, 0.5);
}

.dialog header {
    height: 22px;
    display: flex;
    align-items: center;
    gap: 8px;
    padding: 0 10px 0 8px;
    border-bottom: 1px solid #aaa;
    border-radius: 5px 5px 0 0;
    background: linear-gradient(#ececec, #cfcfcf);
}

.light {
    width: 12px;
    height: 12px;
    border: 1px solid #b5b5b5;
    border-radius: 50%;
    background: #c9c9c9;
}

.light.close {
    border-color: #e2443f;
    background: #fc4b48;
}

.light.zoom {
    border-color: #06ae2c;
    background: #04c431;
}

.dialog h1 {
    flex: 1;
    padding-right: 36px;
    text-align: center;
    font-size: 13px;
    font-weight: normal;
    color: #444;
}

.filter-row {
    display: flex;
    align-items: flex-start;
    padding: 10px 10px 0 14px;
    height: 39px;
}

.filter-row label {
    line-height: 22px;
}

.filter-row > input {
    width: 210px;
    height: 24px;
    margin: 0 4px 0 auto;
    padding: 0 3px 6px;
    border: 1px solid #8e9494;
    background: #fff;
}

.btn {
    height: 24px;
    width: 54px;
    border: 1px solid #9a9fa0;
    background: linear-gradient(#e4e4e4, #fafafa);
}

.btn:disabled {
    color: #969c9c;
    border-color: #a5abab;
    background: #c5caca;
}

.mid {
    width: 94px;
}

.filter-row .mid {
    margin: 0 10px 0 4px;
}

.select-wrap {
    position: relative;
    margin-left: 5px;
}

.select-wrap select {
    appearance: none;
    width: 155px;
    height: 18px;
    padding: 0 4px;
    border: 1px solid #8e9494;
    background: linear-gradient(#dedede, #f5f5f5);
}

.select-wrap svg {
    position: absolute;
    right: 5px;
    top: 4px;
}

.action-list {
    height: 265px;
    margin: 0 10px 0 12px;
    background: #dedfe1;
}

.action-list table {
    width: 100%;
    border-collapse: collapse;
    table-layout: fixed;
}

.action-list th {
    height: 17px;
    padding: 0 2px;
    text-align: left;
    font-weight: normal;
    background: #fff;
    border-bottom: 1px solid #bbb;
}

.action-list th:first-child {
    width: 123px;
}

.action-list th + th {
    border-left: 1px solid #ddd;
}

.action-list td {
    height: 19px;
    padding: 0 4px;
    font-size: 13px;
    background: #4b6870;
    color: #fff;
}

.dialog-lower {
    display: flex;
    justify-content: space-between;
    padding: 3px 12px 0 15px;
}

fieldset {
    margin: 0;
    padding: 0;
    border: 0;
}

legend {
    padding: 0 10px 1px;
    font-size: 12px;
}

.shortcut-box {
    display: flex;
    gap: 5px;
    width: 191px;
    padding: 5px 2px 5px 4px;
    border-radius: 3px;
    background: #b0b7b7;
}

.shortcut-list {
    flex: 1;
    height: 52px;
    background: #dedfe1;
}

.stack {
    display: flex;
    flex-direction: column;
    gap: 5px;
}

.stack .btn {
    width: 61px;
}

.custom {
    display: grid;
    grid-template-columns: auto repeat(4, 70px);
    gap: 7px 3px;
    align-items: center;
    align-content: start;
    padding-top: 16px;
    text-align: right;
}

.custom span {
    padding-right: 7px;
}

.custom .btn {
    width: 70px;
}

.dialog-foot {
    display: flex;
    gap: 5px;
    padding: 11px 9px 7px 12px;
}

.run {
    margin-left: auto;
}
```
FILE: script.js
```javascript
const NS = "http://www.w3.org/2000/svg";

function draw(parent, tag, attrs, text) {
    const el = document.createElementNS(NS, tag);
    Object.keys(attrs).forEach(k => el.setAttribute(k, attrs[k]));
    if (text) {
        el.textContent = text;
    }
    parent.appendChild(el);
    return el;
}

const item = document.querySelector("#item");
const ruler = document.querySelector("#ruler");
const grid = document.querySelector("#grid");

// stretch markers: [x, rate]
const markers = [
    [7, "0.96x"], [55, "0.70x"], [104, "0.81x"], [153], [202], [252], [301], [350], [400], [449],
    [498], [547], [596], [645], [694], [743], [792, "0.91x"], [841, "1.05x"], [891, "0.96x"],
    [940, "0.96x"], [989, "1.13x"], [1038, "1.14x"], [1087, "0.50x"], [1136, "0.98x"],
    [1186, "0.96x"], [1236, "0.85x"], [1284, "0.78x"], [1333, "0.98"]
];

// transients: [x, size]
const hits = [[154, 1], [646, 1.03], [940, 1], [1136, 0.83], [1333, 0.62]];
const shape = [[0, 0], [1, -36], [3, 79], [5, -61], [8, 28], [11, -4], [13, -10], [15, 11], [18, -12], [20, 6], [23, 3], [26, -4], [29, 2], [33, 0]];

const mid = 204;
let path = "M0 " + mid;
let x = 0;
while (x < 1358) {
    const hit = hits.find(h => x <= h[0] && x + 2 > h[0]);
    if (hit) {
        shape.forEach(p => {
            path += "L" + (hit[0] + p[0]) + " " + (mid + p[1] * hit[1]);
        });
        x = hit[0] + 34;
    } else {
        path += "L" + x + " " + (mid + (x * x % 7 > 3 ? 1 : 0) - (x % 13 == 0 ? 1 : 0));
        x += 2;
    }
}

markers.forEach(m => {
    draw(item, "line", { x1: m[0] + 0.5, x2: m[0] + 0.5, y1: 0, y2: 411, class: m[0] > 1250 ? "late" : "stretch" });
    if (m[1]) {
        draw(item, "text", { x: m[0] + 2, y: 405 }, m[1]);
    }
});
draw(item, "path", { d: path, class: "wave" });

// pitch segments between markers: [from, to, y, colour]
const red = "#a63a3a", blue = "#2b8fcf", brown = "#8a6638";
const segments = [
    [-40, 7, 189, blue], [7, 55, 211, red], [55, 104, 263, red], [104, 153, 242, red], [153, 202, 214, red],
    [743, 792, 196, blue], [792, 841, 222, red], [841, 891, 194, blue], [891, 940, 212, red],
    [940, 989, 212, red], [989, 1038, 181, blue], [1038, 1087, 178, blue], [1087, 1136, 304, red],
    [1136, 1186, 208, red], [1186, 1236, 212, red], [1236, 1284, 233, brown], [1284, 1333, 248, brown],
    [1333, 1382, 208, "#b87068"]
];

segments.forEach(s => {
    const [a, b, y, fill] = s;
    draw(item, "line", { x1: a + 8, x2: b - 7, y1: y + 0.5, y2: y + 0.5, stroke: "#7f8c7c" });
    draw(item, "path", { d: `M${a + 1} ${y - 7}l7 7-7 7z`, fill: fill, stroke: "#b8a9a0", "stroke-width": 0.6 });
    draw(item, "path", { d: `M${b} ${y - 7}l-7 7 7 7z`, fill: fill, stroke: "#b8a9a0", "stroke-width": 0.6 });
});

// ruler
[[252, "31"], [1038, "32"]].forEach(b => {
    draw(ruler, "line", { x1: b[0] + 0.5, x2: b[0] + 0.5, y1: 3, y2: 33, stroke: "#aaa" });
    draw(ruler, "text", { x: b[0] + 4, y: 10, class: "bar" }, b[1]);
});
[[45, "30.4"], [438, "31.2"], [635, "31.3"], [831, "31.4"], [1225, "32.2"]].forEach(b => {
    draw(ruler, "text", { x: b[0], y: 16 }, b[1]);
});
draw(ruler, "line", { x1: 645.5, x2: 645.5, y1: 25, y2: 33, stroke: "#888" });

// beat lines, hidden behind the media item
[252, 645, 1038].forEach(b => {
    draw(grid, "line", { x1: b + 0.5, x2: b + 0.5, y1: 0, y2: 15 });
    draw(grid, "line", { x1: b + 0.5, x2: b + 0.5, y1: 426, y2: 2000 });
});
```
